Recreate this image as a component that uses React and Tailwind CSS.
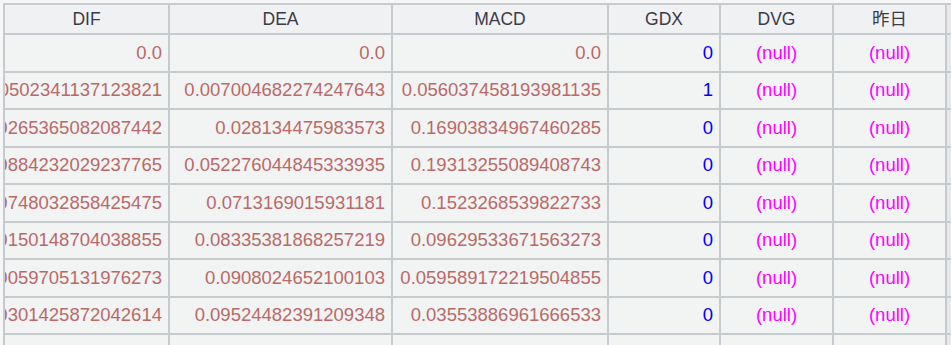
const cols = [
  { key: "dif", label: "DIF", w: "w-[165px]" },
  { key: "dea", label: "DEA", w: "w-[223px]" },
  { key: "macd", label: "MACD", w: "w-[216px]" },
  { key: "gdx", label: "GDX", w: "w-[112px]" },
  { key: "dvg", label: "DVG", w: "w-[113px]" },
  { key: "zr", label: "昨日", w: "w-[113px]" },
];

const rows = [
  ["0.0", "0.0", "0.0", "0"],
  ["0.0502341137123821", "0.007004682274247643", "0.056037458193981135", "1"],
  ["0.0265365082087442", "0.028134475983573", "0.16903834967460285", "0"],
  ["0.0884232029237765", "0.052276044845333935", "0.19313255089408743", "0"],
  ["0.0748032858425475", "0.0713169015931181", "0.1523268539822733", "0"],
  ["0.0150148704038855", "0.08335381868257219", "0.09629533671563273", "0"],
  ["0.0059705131976273", "0.0908024652100103", "0.059589172219504855", "0"],
  ["0.0301425872042614", "0.09524482391209348", "0.03553886961666533", "0"],
];

const cell = "shrink-0 border-r-2 border-b-2 border-[#c5cbce] overflow-hidden whitespace-nowrap flex items-center";

function NumCell({ w, children, color = "text-[#b96a68]" }) {
  return (
    <div className={`${cell} ${w} justify-end pr-[6px] ${color}`}>
      <span>{children}</span>
    </div>
  );
}

function NullCell({ w }) {
  return (
    <div className={`${cell} ${w} justify-center text-[#ff00ff]`}>
      <span>(null)</span>
    </div>
  );
}

export default function App() {
  return (
    <div
      className="w-[951px] h-[345px] overflow-hidden bg-[#f7f7f7] pl-[3px] pt-[3px]"
      style={{ fontFamily: '"Liberation Sans", Arial, "Noto Sans CJK SC", sans-serif' }}
    >
      <div className="w-[1100px] border-l-2 border-t-2 border-[#c5cbce] bg-[#f2f3f3]">
        {/* header */}
        <div className="flex h-[30px] text-[17.5px] text-[#3b3b48] bg-[#eff1f2]">
          {cols.map((c) => (
            <div key={c.key} className={`${cell} ${c.w} justify-center`}>
              {c.label}
            </div>
          ))}
          <div className={`${cell} w-[100px] bg-[#e6e8e9]`} />
        </div>

        {/* body */}
        {rows.map((r, i) => (
          <div key={i} className="flex h-[37.5px] text-[18.5px]">
            <NumCell w="w-[165px]">{r[0]}</NumCell>
            <NumCell w="w-[223px]">{r[1]}</NumCell>
            <NumCell w="w-[216px]">{r[2]}</NumCell>
            <NumCell w="w-[112px]" color="text-[#0000ff]">
              {r[3]}
            </NumCell>
            <NullCell w="w-[113px]" />
            <NullCell w="w-[113px]" />
            <div className={`${cell} w-[100px] bg-[#e6e8e9]`} />
          </div>
        ))}
        <div className="flex h-[37.5px]">
          {cols.map((c) => (
            <div key={c.key} className={`${cell} ${c.w}`} />
          ))}
          <div className={`${cell} w-[100px] bg-[#e6e8e9]`} />
        </div>
      </div>
    </div>
  );
}
